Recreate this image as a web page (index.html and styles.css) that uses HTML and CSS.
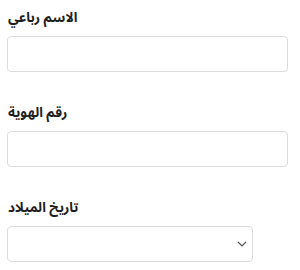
FILE: index.html
```html
<!DOCTYPE html>
<html lang="ar">
<head>
<meta charset="utf-8">
<link rel="stylesheet" href="styles.css">
</head>
<body>
<form class="form">
  <div class="field">
    <label class="label">الاسم رباعي</label>
    <input class="input wide" type="text">
  </div>
  <div class="field">
    <label class="label">رقم الهوية</label>
    <input class="input wide" type="text">
  </div>
  <div class="field">
    <label class="label">تاريخ الميلاد</label>
    <div class="select">
      <svg class="chev" width="10" height="6" viewBox="0 0 10 6"><path d="M1 1l4 4 4-4" fill="none" stroke="#555" stroke-width="1.2"/></svg>
    </div>
  </div>
</form>
</body>
</html>
```
FILE: styles.css
```css
html, body { margin: 0; padding: 0; background: #fff; }
body { font-family: "Noto Sans Arabic", "DejaVu Sans", sans-serif; }
.form { padding: 8px 0 0 7px; display: flex; flex-direction: column; gap: 31px; }
.field { display: flex; flex-direction: column; align-items: flex-start; gap: 8px; }
.label { display: block; font-size: 13.5px; font-weight: 700; line-height: 20px; color: #1e1e1e; direction: rtl; padding-left: 1px; }
.input { box-sizing: border-box; height: 36px; border: 1px solid #dcdcdc; border-radius: 4px; background: #fff; margin: 0; outline: none; }
.wide { width: 281px; }
.select { box-sizing: border-box; width: 246px; height: 36px; border: 1px solid #dcdcdc; border-radius: 4px; display: flex; align-items: center; justify-content: flex-end; padding-right: 5px; }
.chev { display: block; }
```
